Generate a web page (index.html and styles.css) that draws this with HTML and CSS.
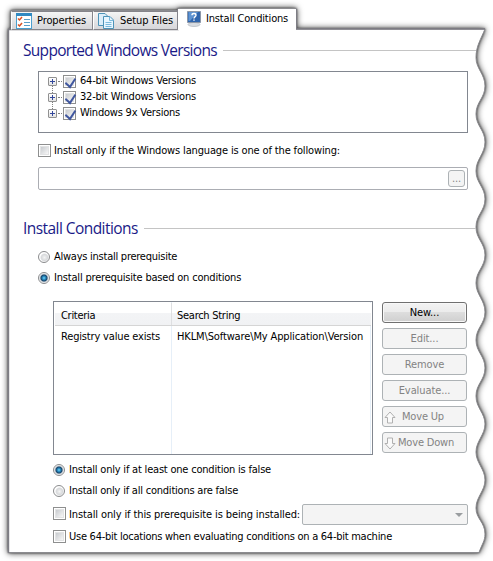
FILE: index.html
```
<!DOCTYPE html>
<html lang="en">
<head>
<meta charset="utf-8">
<title>Install Conditions</title>
<link rel="stylesheet" href="styles.css">
</head>
<body>
<svg class="frame" viewBox="0 0 493 561" aria-hidden="true">
  <path class="sheet" d="M11 29V10.5H178V8.5H296V29H485C481 39 476 46 476 57.500S485 74 485 86S476 102 476 114S485 130 485 142S476 159 476 171S485 187 485 199S476 215 476 227S485 243 485 255S476 271 476 283S485 300 485 312S476 328 476 340S485 356 485 368S476 384 476 396S485 413 485 424S476 441 476 452S485 469 485 480S476 497 476 508S485 522 485 534C485 541 482 544 479 552.500H8.500V29Z"/>
  <path class="edge" d="M8.500 553V29.500H178V8.500M296.500 9V29H485"/>
</svg>
<main class="window">
  <nav class="tabs">
    <div class="tab properties">
      <svg width="16" height="16" viewBox="0 0 16 16"><rect x=".5" y=".5" width="15" height="15" fill="#fff" stroke="#4b9fcf"/><path d="M0 1.500H16" stroke="#3189c2" stroke-width="3"/><path d="M8 6.500H14M8 9.500H14M8 12.500H14" stroke="#5b9fc9"/><path d="M2 5.500L3.500 7L6 4M2 11.500L3.500 13L6 10" fill="none" stroke="#db5225" stroke-width="1.500"/></svg>
      <span class="t">Properties</span>
    </div>
    <div class="tab files">
      <svg width="16" height="16" viewBox="0 0 16 16"><path d="M.5 .5H7L9.500 3V12.500H.5Z" fill="#dceefa" stroke="#4d93b8"/><path d="M5.500 3.500H12L15.500 7V15.500H5.500Z" fill="#e8f6ff" stroke="#4d93b8"/><path d="M11.500 3.500V7.500H15.500M7.500 9.500H13.500M7.500 11.500H13.500M7.500 13.500H13.500" fill="none" stroke="#7bb9dc"/></svg>
      <span class="t">Setup Files</span>
    </div>
    <div class="tab active">
      <svg width="16" height="16" viewBox="0 0 16 16"><ellipse cx="8" cy="13.500" rx="6" ry="2" fill="#d9dde2" stroke="#aab0b8" stroke-width=".6"/><path d="M1.500 .5H14.500V11.500H1.500Z" fill="#2f65ad" stroke="#8c97a8"/><path d="M2.500 1H12L4 10H2.500Z" fill="#5f94d2"/><path d="M6 4.200C6 2 10 2 10 4.200C10 5.700 8 5.500 8 7.500M8 8.500V9.800" fill="none" stroke="#fff" stroke-width="1.400"/></svg>
      <span class="t">Install Conditions</span>
    </div>
  </nav>

  <h2 class="versions-title"><span>Supported Windows Versions</span></h2>
  <div class="tree">
    <div class="node"><i class="plus"></i><i class="dots"></i><i class="check on"></i><span class="t">64-bit Windows Versions</span></div>
    <div class="node"><i class="plus"></i><i class="dots"></i><i class="check on"></i><span class="t">32-bit Windows Versions</span></div>
    <div class="node"><i class="plus"></i><i class="dots"></i><i class="check on"></i><span class="t w9x">Windows 9x Versions</span></div>
  </div>
  <label class="option language"><i class="check"></i><span class="t">Install only if the Windows language is one of the following:</span></label>
  <div class="field"><button class="browse">...</button></div>

  <h2 class="conditions-title"><span>Install Conditions</span></h2>
  <label class="option always"><i class="radio"></i><span class="t">Always install prerequisite</span></label>
  <label class="option based"><i class="radio on"></i><span class="t">Install prerequisite based on conditions</span></label>

  <section class="conditions">
    <div class="list">
      <div class="head"><span class="t criteria">Criteria</span><span class="t search">Search String</span></div>
      <div class="row"><span class="t registry">Registry value exists</span><span class="t path">HKLM\Software\My Application\Version</span></div>
    </div>
    <div class="actions">
      <button class="enabled">New...</button>
      <button>Edit...</button>
      <button>Remove</button>
      <button>Evaluate...</button>
      <button class="move"><svg width="12" height="13" viewBox="0 0 12 13"><path d="M6 1L11 6.500H8.500V12H3.500V6.500H1Z"/></svg><span>Move Up</span></button>
      <button class="move down"><svg width="12" height="13" viewBox="0 0 12 13"><path d="M6 12L1 6.500H3.500V1H8.500V6.500H11Z"/></svg><span>Move Down</span></button>
    </div>
  </section>

  <div class="rules">
    <label class="option least"><i class="radio on"></i><span class="t">Install only if at least one condition is false</span></label>
    <label class="option all"><i class="radio"></i><span class="t">Install only if all conditions are false</span></label>
    <div class="with-combo">
      <label class="option being"><i class="check"></i><span class="t">Install only if this prerequisite is being installed:</span></label>
      <div class="combo"></div>
    </div>
    <label class="option locations"><i class="check"></i><span class="t">Use 64-bit locations when evaluating conditions on a 64-bit machine</span></label>
  </div>
</main>
</body>
</html>
```
FILE: styles.css
```
* { box-sizing: border-box; }
body {
  margin: 0;
  width: 493px;
  height: 561px;
  overflow: hidden;
  background: #fff;
  color: #000;
  font: 11px/14px "DejaVu Sans Condensed", "DejaVu Sans", sans-serif;
  letter-spacing: -0.18px;
}
svg { display: block; flex: none; }
.frame { position: absolute; left: 0; top: 0; width: 493px; height: 561px; }
.sheet {
  fill: #fff;
  stroke: #8b8b8f;
  stroke-width: 1;
  filter: drop-shadow(0 0 1px rgba(0, 0, 0, .6)) drop-shadow(0 0 3px rgba(0, 0, 0, .75));
}
.edge { fill: none; stroke: #7d7c84; stroke-width: 1.4; }
.window { position: relative; width: 476px; padding: 9px 0 0 9px; }
.t { white-space: nowrap; }

.tabs { display: flex; height: 21px; align-items: flex-end; padding-left: 2px; }
.tab {
  display: flex;
  align-items: center;
  height: 19px;
  border: 1px solid #85848a;
  border-left-color: #fff;
  background: linear-gradient(#f5f5f5, #e5e5e7 50%, #d6d6da);
}
.tab svg { margin: 0 5px 0 4px; }
.properties { width: 82px; letter-spacing: -0.1px; }
.files { width: 85px; letter-spacing: -0.05px; }
.files svg { margin: 0 6px 0 4px; }
.active {
  width: 118px;
  height: 21px;
  padding-bottom: 1px;
  border: 0;
  background: #fff;
  letter-spacing: -0.18px;
}
.active svg { margin: 0 4px 0 8px; }

h2 {
  display: flex;
  align-items: center;
  margin: 0 0 0 14px;
  height: 20px;
  color: #1a1a87;
  font: 15.5px/20px "Open Sans", "Noto Sans", sans-serif;
  letter-spacing: -0.7px;
  white-space: nowrap;
}
h2::after { content: ""; flex: 1; height: 1px; margin-left: 6px; background: #c4c4c4; }
.versions-title { margin-top: 10px; }
.conditions-title { margin-top: 29px; letter-spacing: -0.56px; }

.tree { margin: 11px 0 0 29px; width: 430px; height: 62px; border: 1px solid #828790; padding: 1px 0 0 9px; }
.node { display: flex; align-items: center; height: 16px; letter-spacing: -0.22px; }
.node .t { margin-left: 4px; }
.w9x { letter-spacing: -0.21px; }
.plus {
  width: 9px;
  height: 9px;
  border: 1px solid #919191;
  border-radius: 1px;
  background:
    linear-gradient(#34489b, #34489b) center / 5px 1px no-repeat,
    linear-gradient(#34489b, #34489b) center / 1px 5px no-repeat,
    linear-gradient(#fff, #e3e3e3);
  position: relative;
}
.node + .node .plus::before {
  content: "";
  position: absolute;
  left: 3px;
  top: -8px;
  height: 7px;
  border-left: 1px dotted #808080;
}
.dots { width: 4px; margin: 0 1px; border-top: 1px dotted #808080; }
.check {
  width: 13px;
  height: 13px;
  flex: none;
  border: 1px solid #8e8f8f;
  background: linear-gradient(135deg, #c8cbcf, #f7f7f7) center / 7px 7px no-repeat, linear-gradient(#e2e3e4, #e2e3e4) center / 9px 9px no-repeat, #fff;
  position: relative;
}
.option .check { margin-top: -2px; }
.check.on::after {
  content: "";
  position: absolute;
  left: 3px;
  top: 0;
  width: 5px;
  height: 9px;
  border: solid #40579f;
  border-width: 0 2px 2px 0;
  transform: rotate(33deg) skewY(8deg);
}
.radio {
  width: 12px;
  height: 12px;
  flex: none;
  border: 1px solid #8a8b8d;
  border-radius: 50%;
  background: radial-gradient(circle at 55% 55%, #f4f4f4 0, #d8dadc 3px, #dfe0e2 3.5px, #fff 4.5px);
}
.radio.on { background: radial-gradient(circle at 50% 50%, #7ad6f8 0, #2a8fc4 1.5px, #17466d 3px, #c5cbd1 4px, #fff 5px); }

.option { display: flex; align-items: center; height: 14px; margin-left: 29px; }
.option .t { margin-left: 3px; }
.option .radio + .t { margin-left: 4px; }
.language { margin-top: 11px; letter-spacing: -0.144px; }
.field {
  display: flex;
  align-items: center;
  justify-content: flex-end;
  width: 430px;
  height: 23px;
  margin: 9px 0 0 29px;
  padding-right: 2px;
  border: 1px solid #abadb3;
  border-radius: 2px;
}
.browse { width: 17px; height: 17px; line-height: 13px; }
.conditions-title { margin-top: 28px; }
.always { margin-top: 12px; letter-spacing: -0.25px; }
.based { margin-top: 7px; letter-spacing: -0.19px; }

.conditions { display: flex; gap: 9px; margin: 16px 0 0 44px; }
.list {
  width: 320px;
  height: 154px;
  border: 1px solid #828790;
  padding: 1px;
  background:
    linear-gradient(#e6eff8, #e6eff8) 117px 0 / 1px 100% no-repeat,
    linear-gradient(#e6eff8, #e6eff8) 316px 0 / 1px 100% no-repeat;
}
.head, .row { display: grid; grid-template-columns: 116px 1fr; align-items: center; padding-left: 6px; }
.head { height: 23px; padding-top: 3px; border-bottom: 1px solid #d5d5d5; background: linear-gradient(90deg, #dedfe1, #dedfe1) 116px 0 / 1px 100% no-repeat, linear-gradient(#fff 45%, #f3f4f6 46%, #f1f2f4); }
.row { height: 22px; }
.criteria { letter-spacing: -0.3px; }
.search { letter-spacing: -0.27px; }
.registry { letter-spacing: -0.165px; }
.path { letter-spacing: -0.13px; }

button {
  display: block;
  margin: 0;
  padding: 0;
  border: 1px solid #adb2b5;
  border-radius: 3px;
  background: #f4f4f4;
  color: #838383;
  font: inherit;
  letter-spacing: -0.1px;
}
.actions { display: grid; grid-auto-rows: 21px; gap: 5px; align-content: start; padding-top: 1px; }
.actions button { width: 85px; height: 21px; padding-top: 1px; }
.actions .enabled {
  border-color: #707070;
  color: #000;
  background: linear-gradient(#f3f3f3, #ebebeb 50%, #dddddd 50%, #cfcfcf);
  box-shadow: inset 0 0 0 1px #f8f8f8;
}
.actions .move { display: flex; align-items: center; padding-left: 1px; letter-spacing: -0.18px; }
.move svg { fill: #fafafa; stroke: #b0b0b0; }
.move span { margin-left: 6px; }
.move.down span { margin-left: 2px; }

.rules { margin: 8px 0 0 15px; }
.least { letter-spacing: -0.204px; }
.all { margin-top: 7px; letter-spacing: -0.22px; }
.with-combo { display: flex; align-items: center; gap: 2px; height: 21px; margin-top: 6px; }
.being { letter-spacing: -0.117px; }
.combo {
  display: flex;
  align-items: center;
  justify-content: flex-end;
  width: 166px;
  height: 21px;
  margin-left: auto;
  margin-right: 8px;
  padding-right: 4px;
  border: 1px solid #adb2b5;
  border-radius: 2px;
  background: #f4f4f4;
}
.combo::after { content: ""; border: 4px solid transparent; border-top-color: #9a9da0; border-bottom: 0; }
.locations { margin-top: 5px; letter-spacing: -0.257px; }
```
